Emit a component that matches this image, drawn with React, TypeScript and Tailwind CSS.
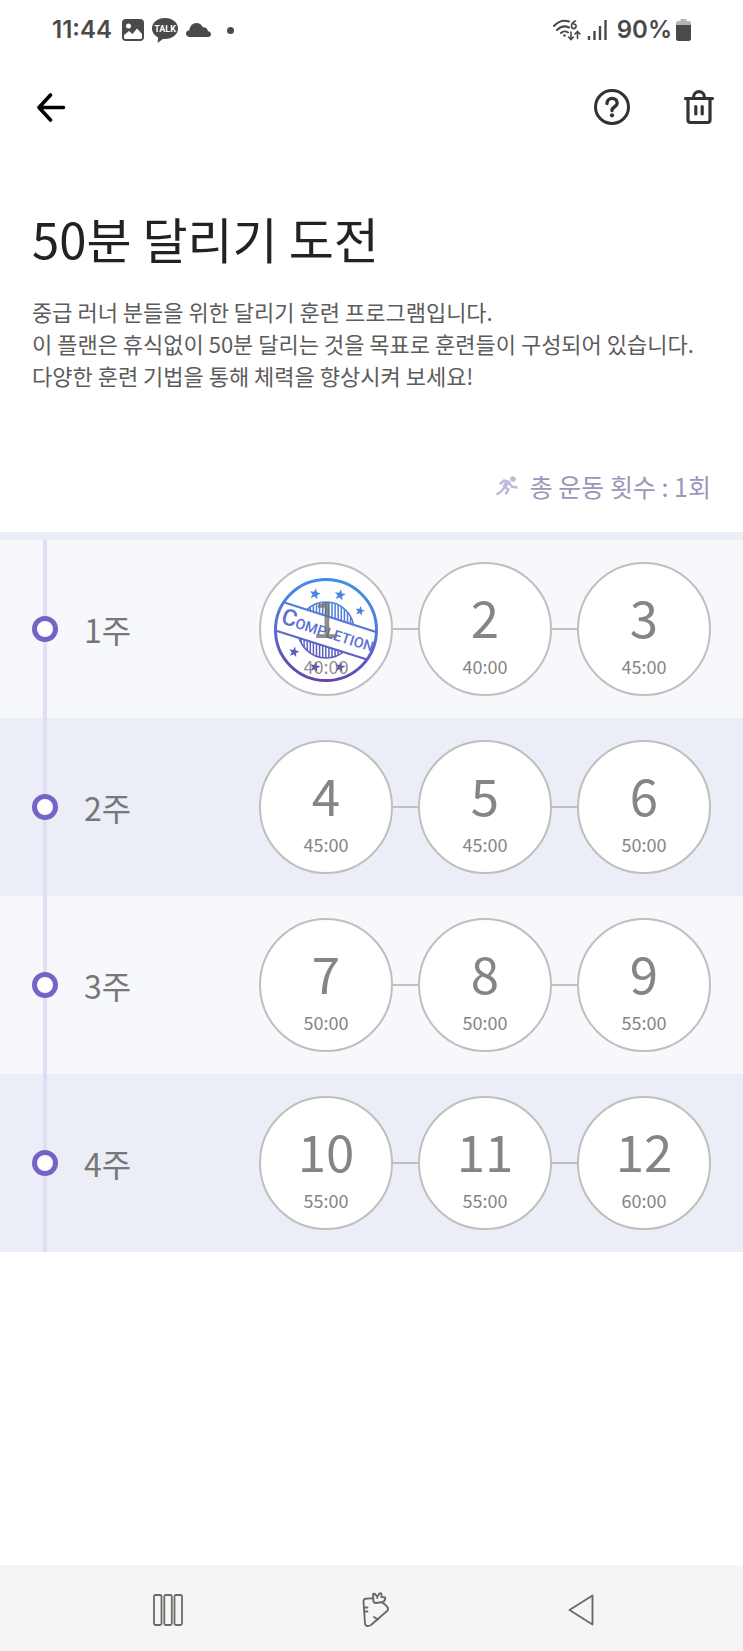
type Session = {
  day: number;
  time: string;
  done?: boolean;
};

const WEEKS: { label: string; sessions: Session[] }[] = [
  {
    label: '1주',
    sessions: [
      { day: 1, time: '40:00', done: true },
      { day: 2, time: '40:00' },
      { day: 3, time: '45:00' },
    ],
  },
  {
    label: '2주',
    sessions: [
      { day: 4, time: '45:00' },
      { day: 5, time: '45:00' },
      { day: 6, time: '50:00' },
    ],
  },
  {
    label: '3주',
    sessions: [
      { day: 7, time: '50:00' },
      { day: 8, time: '50:00' },
      { day: 9, time: '55:00' },
    ],
  },
  {
    label: '4주',
    sessions: [
      { day: 10, time: '55:00' },
      { day: 11, time: '55:00' },
      { day: 12, time: '60:00' },
    ],
  },
];

// Upper stars are blue, lower ones fall into the violet end of the gradient
const STARS = [
  { x: 47, y: 23, r: 5.8 },
  { x: 72, y: 24, r: 5.8 },
  { x: 92, y: 40, r: 5 },
  { x: 26, y: 81, r: 5.5 },
  { x: 47, y: 96, r: 5.5 },
  { x: 72, y: 96, r: 5.5 },
];

const HATCH = Array.from({ length: 17 }, (_, i) => 33 + i * 3.1);

function starPoints(cx: number, cy: number, r: number) {
  return Array.from({ length: 10 }, (_, i) => {
    const radius = i % 2 === 0 ? r : r * 0.42;
    const angle = (Math.PI / 5) * i - Math.PI / 2 + 0.2;
    return `${(cx + radius * Math.cos(angle)).toFixed(2)},${(cy + radius * Math.sin(angle)).toFixed(2)}`;
  }).join(' ');
}

function CompletionStamp() {
  return (
    <svg viewBox="0 0 116 116" className="pointer-events-none absolute inset-[7px] opacity-90">
      <defs>
        <linearGradient id="stamp-ink" gradientUnits="userSpaceOnUse" x1="66" y1="8" x2="50" y2="110">
          <stop offset="0" stopColor="#2a86e4" />
          <stop offset="0.5" stopColor="#4763cf" />
          <stop offset="1" stopColor="#56309f" />
        </linearGradient>
        {/* everything outside the slanted text band */}
        <clipPath id="stamp-band">
          <path d="M0 0H116V63L0 26ZM0 57L116 94V116H0Z" />
        </clipPath>
      </defs>
      <g fill="none" stroke="url(#stamp-ink)">
        <circle cx="58" cy="59" r="50.500" strokeWidth="3" />
        <path d="M15 31L108 61M9 60L99 88.500" strokeWidth="2.200" />
        <g clipPath="url(#stamp-band)">
          <circle cx="58" cy="59" r="28" strokeWidth="1.600" />
          {HATCH.map((x) => {
            const h = Math.sqrt(Math.max(0, 28 * 28 - (x - 58) * (x - 58)));
            return <path key={x} d={`M${x} ${59 - h}V${59 + h}`} strokeWidth="1.500" />;
          })}
        </g>
      </g>
      <g fill="url(#stamp-ink)">
        {STARS.map((star) => (
          <polygon key={`${star.x}-${star.y}`} points={starPoints(star.x, star.y, star.r)} />
        ))}
      </g>
      <text
        transform="translate(12 52) rotate(17.500)"
        fontSize="14.500"
        fill="#4763cf"
        className="font-[Roboto,sans-serif] font-medium"
      >
        <tspan fontSize="23">C</tspan>OMPLETION
      </text>
    </svg>
  );
}

function StatusBar() {
  return (
    <div className="flex h-[60px] items-center justify-between px-[52px] font-[Inter,sans-serif] text-2xl font-semibold text-[#4a4a4a]">
      <div className="flex items-center">
        <span>11:44</span>
        <svg viewBox="0 0 22 22" className="ml-2.5 h-[22px] w-[22px]">
          <path
            fillRule="evenodd"
            fill="currentColor"
            d="M4 0H18Q22 0 22 4V18Q22 22 18 22H4Q0 22 0 18V4Q0 0 4 0ZM6.500 4.500A2.500 2.500 0 1 0 6.500 9.500A2.500 2.500 0 1 0 6.500 4.500ZM2 18.500Q2 20 3.500 20H18.500Q20 20 20 18.500V15L15 9.500L10.500 15L7 12L2 16Z"
          />
        </svg>
        <svg viewBox="0 0 26 25" className="ml-2 h-[25px] w-[26px]">
          <path
            fill="currentColor"
            d="M13 0C20.200 0 26 4.600 26 10.500S20.200 21 13 21L11 20.900L5.500 25L6.200 19.400C2.500 17.500 0 14.300 0 10.500C0 4.600 5.800 0 13 0Z"
          />
          <text x="13" y="13.800" textAnchor="middle" fontSize="9" fill="#fff" className="font-[Roboto,sans-serif] font-bold">
            TALK
          </text>
        </svg>
        <svg viewBox="0 0 25 14" className="ml-2 h-3.5 w-[25px]">
          <path
            fill="currentColor"
            d="M4 14C1.500 14 0 12.500 0 10.600C0 8.700 1.500 7.400 3.400 7.300C3.800 3.200 6.500 0 10.500 0C13.500 0 15.800 1.800 16.800 4.300C19.800 3.900 21.700 6 22 8.300C23.900 8.500 25 9.700 25 11.200C25 12.900 23.800 14 22 14Z"
          />
        </svg>
        <span className="ml-4 h-[7px] w-[7px] rounded-full bg-[#4a4a4a]" />
      </div>
      <div className="flex items-center">
        <svg viewBox="0 0 28 22" className="h-[22px] w-7">
          <g fill="none" stroke="currentColor" strokeLinecap="round">
            <path d="M1 7C5.500 2 11 .800 16 2.500M4 11C7.500 7.500 12 6.500 16 8.500M8 14C10 12 13 12 15 13.500" strokeWidth="2" />
            <path d="M22.500 2C19.500 3 18.500 5 18.500 7.200A2.300 2.300 0 1 0 20.800 5" strokeWidth="1.700" />
            <path d="M18 13V20M15.500 18L18 20.500L20.500 18M24.500 19.500V12.500M22 15L24.500 12.500L27 15" strokeWidth="1.600" />
          </g>
          <circle cx="11.500" cy="16.500" r="1.300" fill="currentColor" />
        </svg>
        <svg viewBox="0 0 20 20" className="ml-1.5 h-5 w-5">
          <path d="M2 16V20M7.500 11V20M13 6V20M18.500 0V20" stroke="currentColor" strokeWidth="2.400" />
        </svg>
        <span className="ml-2.5">90%</span>
        <svg viewBox="0 0 15 22" className="ml-1 h-[22px] w-[15px]">
          <path d="M4.500 0H10.500V2H13Q15 2 15 4V7H0V4Q0 2 2 2H4.500Z" fill="#b5b5b5" />
          <path d="M0 6H15V19.500Q15 22 12.500 22H2.500Q0 22 0 19.500Z" fill="currentColor" />
        </svg>
      </div>
    </div>
  );
}

function SessionCircle({ day, time, done }: Session) {
  return (
    <button
      type="button"
      className="relative flex h-[134px] w-[134px] shrink-0 flex-col items-center rounded-full border-2 border-[#bfbfbf] bg-white pt-[22px]"
    >
      {done && <CompletionStamp />}
      <span className={`text-[51px] leading-[60px] ${done ? 'relative text-[#707070]/80' : 'text-[#858585]'}`}>{day}</span>
      <span className={`mt-2 text-lg leading-6 ${done ? 'relative text-[#707070]/80' : 'text-[#858585]'}`}>{time}</span>
    </button>
  );
}

export default function App() {
  return (
    <div className="flex min-h-screen flex-col bg-white font-['Noto_Sans_CJK_KR',sans-serif]">
      <StatusBar />

      <header className="flex h-[94px] items-center justify-between pr-7 pl-9">
        <button type="button" aria-label="뒤로">
          <svg
            viewBox="0 0 30 30"
            className="h-[30px] w-[30px]"
            fill="none"
            stroke="#000"
            strokeWidth="3.600"
            strokeLinecap="round"
            strokeLinejoin="round"
          >
            <path d="M14.500 3L3 15.500L14.500 28M3 15.500H27.500" />
          </svg>
        </button>
        <div className="flex items-center gap-[52px]">
          <button type="button" aria-label="도움말">
            <svg viewBox="0 0 38 38" className="h-[38px] w-[38px]" fill="none" stroke="#333" strokeWidth="3" strokeLinecap="round">
              <circle cx="19" cy="19" r="16.500" />
              <path d="M14 15.500C14 8.700 24.200 8.700 24.200 15C24.200 19 19 18.500 19 22.500" strokeWidth="3.400" />
              <circle cx="19" cy="27.300" r="2.100" fill="#333" stroke="none" />
            </svg>
          </button>
          <button type="button" aria-label="삭제">
            <svg viewBox="0 0 32 38" className="h-[38px] w-8" fill="none" stroke="#333" strokeWidth="3.200" strokeLinecap="round">
              <path d="M2.500 10.500H29.500M5 10.500V32Q5 34.500 7.500 34.500H24.500Q27 34.500 27 32V10.500M10.500 9.500C10.500 1.700 21.500 1.700 21.500 9.500M12.800 18.500V26M19.200 18.500V26" />
            </svg>
          </button>
        </div>
      </header>

      <main className="grow">
        <section className="px-8 pt-12">
          <h1 className="text-[49px] leading-[72px] text-[#222]">50분 달리기 도전</h1>
          <p className="mt-[21px] text-[22px] leading-8 text-[#5c5c5c]">
            중급 러너 분들을 위한 달리기 훈련 프로그램입니다.
            <br />
            이 플랜은 휴식없이 50분 달리는 것을 목표로 훈련들이 구성되어 있습니다.
            <br />
            다양한 훈련 기법을 통해 체력을 향상시켜 보세요!
          </p>
        </section>

        <p className="mt-[77px] flex items-center justify-end gap-3 pr-8 text-[25px] leading-9 text-[#9d95ba]">
          <svg viewBox="0 0 22 20" className="h-5 w-[22px]" fill="none" stroke="#c0b9d8" strokeWidth="2.500" strokeLinecap="round" strokeLinejoin="round">
            <circle cx="17" cy="3" r="2.800" fill="#c0b9d8" stroke="none" />
            <path d="M4.500 7.500L8 4.500L13 6L9 11L12.500 13.500L10 17.500M1.500 18L5 15.500L8 12M13 6L15.500 10.500L20.500 11.500" />
            <path d="M9.500 6L13 6.500L9 11L7.500 10Z" fill="#c0b9d8" strokeWidth="1.500" />
          </svg>
          총 운동 횟수 : 1회
        </p>

        <ol className="mt-7 border-t-8 border-[#ebeef6]">
          {WEEKS.map((week) => (
            <li
              key={week.label}
              className="relative flex items-center justify-between bg-[#f7f8fc] px-8 py-[22px] even:bg-[#ebeef6]"
            >
              <span className="absolute inset-y-0 left-[43px] w-1 bg-[#e1def1]" />
              <div className="relative flex items-center gap-[26px]">
                <span className="h-[26px] w-[26px] rounded-full border-[5px] border-[#7563c8] bg-white" />
                <h2 className="text-[32px] leading-10 text-[#777]">{week.label}</h2>
              </div>
              <div className="flex items-center">
                {week.sessions.map((session, i) => (
                  <div key={session.day} className="flex items-center">
                    {i > 0 && <span className="h-0.5 w-[25px] bg-[#bfbfbf]" />}
                    <SessionCircle {...session} />
                  </div>
                ))}
              </div>
            </li>
          ))}
        </ol>
      </main>

      <nav className="flex h-[86px] items-center justify-between bg-[#f6f5f5] pt-1 pr-[20%] pl-[153px] text-[#6b6b66]">
        <button type="button" aria-label="최근 앱">
          <svg viewBox="0 0 30 32" className="h-8 w-[30px]" fill="none" stroke="currentColor" strokeWidth="1.800">
            <rect x="1" y="1" width="7.500" height="30" rx="1.500" />
            <rect x="11.300" y="1" width="7.500" height="30" rx="1.500" />
            <rect x="21.500" y="1" width="7.500" height="30" rx="1.500" />
          </svg>
        </button>
        <button type="button" aria-label="홈">
          <svg viewBox="0 0 28 36" className="h-9 w-7" fill="none" stroke="currentColor" strokeWidth="1.900" strokeLinecap="round" strokeLinejoin="round">
            <path d="M10.500 6.500C7.500 6.300 5 6.500 3.500 6.800Q1.500 7.200 1.500 9.500L3 31.500C3.200 34.500 6.500 34.500 9 33L25 19Q27 17 25 14.500Q23 12 20 10.500" />
            <path d="M11.500 9.500L11 2.500Q11 1.500 12.500 1.800L15.300 4.500L17.500 1.500Q19.500 .800 19.500 2.500V5L22.500 5.200Q23.800 5.500 23 7.500Q22.300 10 19.500 10.200L14 11Q11.800 11 11.500 9.500ZM15.300 4.500V6M2 15.500H5.500M2.500 19.500H5.500M12 25L16 27.500" />
          </svg>
        </button>
        <button type="button" aria-label="이전">
          <svg viewBox="0 0 26 32" className="h-8 w-[26px]" fill="none" stroke="currentColor" strokeWidth="1.900" strokeLinejoin="round">
            <path d="M24.500 1.500V30.500L1.500 16Z" />
          </svg>
        </button>
      </nav>
    </div>
  );
}
